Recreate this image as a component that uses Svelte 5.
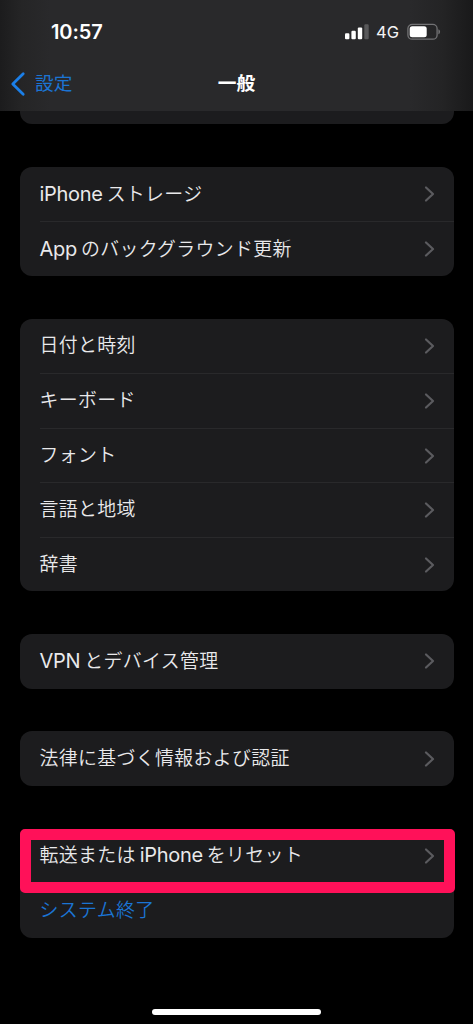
<script>
  const groups = [
    ['iPhone|ストレージ', 'App|のバックグラウンド更新'],
    ['|日付と時刻', '|キーボード', '|フォント', '|言語と地域', '|辞書'],
    ['VPN|とデバイス管理'],
    ['|法律に基づく情報および認証'],
    ['|転送または|iPhone|をリセット', '|システム終了']
  ].map((rows) => rows.map((row) => row.split('|')));
</script>

<div class="screen">
  <header>
    <div class="status">
      <span class="time">10:57</span>
      <div class="indicators">
        <svg class="signal" width="24" height="16" viewBox="0 0 24 16">
          <rect x="0" y="9.3" width="4.4" height="6" rx="1.1" fill="#fff" />
          <rect x="6.4" y="6.8" width="4.4" height="8.5" rx="1.1" fill="#fff" />
          <rect x="12.8" y="3.5" width="4.4" height="11.8" rx="1.1" fill="#fff" />
          <rect x="19.3" y="0.3" width="4.4" height="15" rx="1.1" fill="#59595b" />
        </svg>
        <span class="network">4G</span>
        <svg class="battery" width="34" height="18" viewBox="0 0 34 18">
          <rect x="0.9" y="1.4" width="29.2" height="14.8" rx="4.3" fill="none" stroke="#727274" stroke-width="1.3" />
          <rect x="2.7" y="3.3" width="17" height="11" rx="2.5" fill="#fff" />
          <path d="M31.4 6.2C33.6 7.2 33.6 10.3 31.4 11.3Z" fill="#727274" />
        </svg>
      </div>
    </div>
    <nav>
      <div class="back">
        <svg width="16" height="26" viewBox="0 0 16 26">
          <path d="M13.2 2.8L2.8 13L13.2 23.2" fill="none" stroke="#1b7fe8" stroke-width="2.8" stroke-linecap="round" stroke-linejoin="round" />
        </svg>
        <span>設定</span>
      </div>
      <h1>一般</h1>
    </nav>
  </header>

  <main>
    <div class="card previous"></div>
    {#each groups as rows, g}
      <section class="card">
        {#each rows as parts, r}
          {@const action = g === 4 && r === 1}
          <div class="row" class:action>
            <div class="label">
              {#each parts as part, p}{#if part}<span class={/^[A-Za-z]/.test(part) ? 'latin' : 'kana'} class:lead={p === 0 || (p === 1 && !parts[0])}>{part}</span>{/if}{/each}
            </div>
            {#if !action}
              <svg class="chevron" width="12" height="18" viewBox="0 0 12 18">
                <path d="M2 2.5L9 9L2 15.5" fill="none" stroke="#5b5b5f" stroke-width="2.2" stroke-linecap="round" stroke-linejoin="round" />
              </svg>
            {/if}
          </div>
        {/each}
        {#if g === 4}<div class="highlight"></div>{/if}
      </section>
    {/each}
  </main>
  <footer><div class="home"></div></footer>
</div>

<style>
  :global(body) {
    margin: 0;
    background: #000;
  }
  .screen {
    width: 473px;
    height: 1024px;
    overflow: hidden;
    display: flex;
    flex-direction: column;
    background: #000;
    color: #e9e9eb;
    font-family: Inter, 'Noto Sans CJK JP', sans-serif;
  }
  header {
    box-sizing: border-box;
    height: 110.5px;
    flex: none;
    display: flex;
    flex-direction: column;
    background: linear-gradient(90deg, #1c1c1d 0, #252526 22px, #29292b 50px, #29292b 410px, #242425 442px, #19191a 473px);
  }
  .status {
    height: 58px;
    display: flex;
    justify-content: space-between;
    box-sizing: border-box;
    padding: 20px 32px 0 51px;
  }
  .time {
    font-size: 20px;
    line-height: 24px;
    font-weight: 600;
    letter-spacing: -0.1px;
    color: #fff;
  }
  .indicators {
    display: flex;
    height: 24px;
    align-items: center;
  }
  .signal {
    margin-right: 7px;
  }
  .network {
    font-size: 16.5px;
    line-height: 24px;
    width: 24px;
    margin-right: 7px;
    color: #f4f4f5;
  }
  nav {
    height: 52px;
    display: grid;
    grid-template-columns: 1fr auto 1fr;
    align-items: center;
  }
  .back {
    display: flex;
    align-items: center;
    gap: 9px;
    padding-left: 10px;
    color: #1b74d4;
    font-size: 18.7px;
    line-height: 28px;
  }
  h1 {
    margin: 0;
    color: #fff;
    font-size: 18.7px;
    line-height: 28px;
    font-weight: 700;
  }
  main {
    display: flex;
    flex-direction: column;
    gap: 42.8px;
    padding: 0 19.5px 0 20px;
  }
  .card {
    position: relative;
    border-radius: 12px;
    background: #1c1c1e;
  }
  .previous {
    height: 13.7px;
    border-radius: 0 0 12px 12px;
  }
  .row {
    height: 54.5px;
    box-sizing: border-box;
    margin-left: 19.5px;
    padding-right: 18px;
    display: flex;
    align-items: center;
    justify-content: space-between;
  }
  .row + .row {
    border-top: 1px solid #29292b;
  }
  .label {
    display: flex;
    align-items: baseline;
    line-height: 28px;
    white-space: nowrap;
  }
  .latin {
    font-size: 20px;
    letter-spacing: -0.3px;
    margin-left: 4px;
  }
  .kana {
    font-size: 18.9px;
    letter-spacing: 0.35px;
    margin-left: 4px;
    font-weight: 350;
  }
  .lead {
    margin-left: 0;
  }
  .action {
    color: #1b74d4;
  }
  .chevron {
    flex: none;
  }
  .highlight {
    position: absolute;
    box-sizing: border-box;
    left: 0;
    right: -1.5px;
    top: 0;
    height: 64px;
    border: 11px solid #ff1159;
    border-radius: 5px;
  }
  footer {
    margin-top: auto;
    display: flex;
    justify-content: center;
    padding-bottom: 9.5px;
  }
  .home {
    width: 169px;
    height: 6px;
    border-radius: 3px;
    background: #fff;
  }
</style>
